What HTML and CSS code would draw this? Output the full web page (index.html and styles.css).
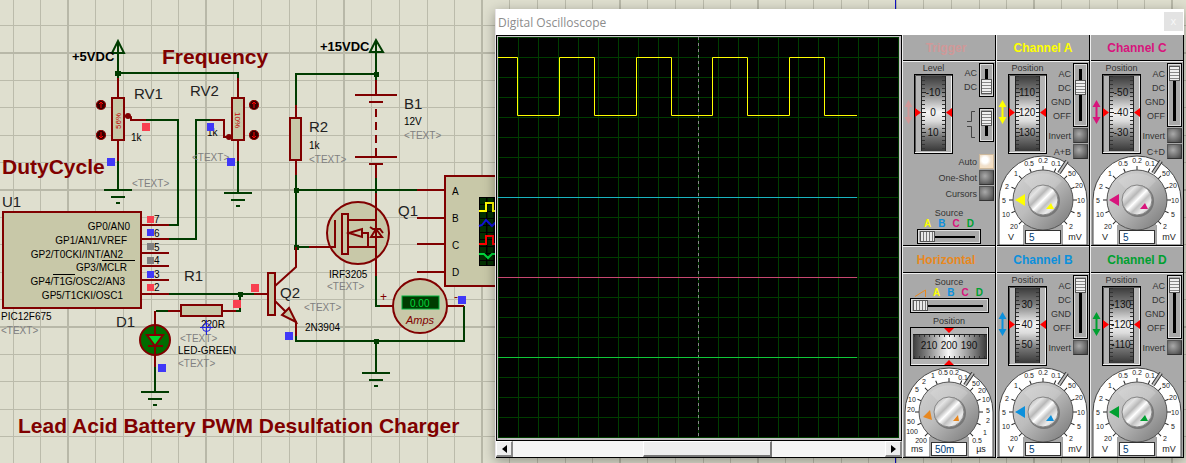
FILE: index.html
```html
<!DOCTYPE html>
<html lang="en">
<head>
<meta charset="utf-8">
<title>Lead Acid Battery PWM Desulfation Charger</title>
<link rel="stylesheet" href="styles.css">
</head>
<body>
<svg class="defs" aria-hidden="true">
  <defs>
    <linearGradient id="drumV" x1="0" y1="0" x2="0" y2="1">
      <stop offset="0" stop-color="#3c3c3c"/><stop offset=".2" stop-color="#787878"/><stop offset=".48" stop-color="#f4f4f4"/><stop offset=".6" stop-color="#dcdcdc"/><stop offset=".82" stop-color="#707070"/><stop offset="1" stop-color="#383838"/>
    </linearGradient>
    <linearGradient id="drumH">
      <stop offset="0" stop-color="#3c3c3c"/><stop offset=".2" stop-color="#868686"/><stop offset=".48" stop-color="#f8f8f8"/><stop offset=".8" stop-color="#868686"/><stop offset="1" stop-color="#383838"/>
    </linearGradient>
    <linearGradient id="knobOuter" x1="0" y1="0" x2="1" y2="1">
      <stop offset="0" stop-color="#d4d4d4"/><stop offset=".45" stop-color="#bcbcbc"/><stop offset="1" stop-color="#747474"/>
    </linearGradient>
    <linearGradient id="knobInner" x1="0" y1="0" x2="1" y2="1">
      <stop offset="0" stop-color="#a0a0a0"/><stop offset=".25" stop-color="#e4e4e4"/><stop offset=".38" stop-color="#b8b8b8"/><stop offset=".5" stop-color="#ffffff"/><stop offset=".62" stop-color="#c0c0c0"/><stop offset=".76" stop-color="#ececec"/><stop offset="1" stop-color="#a4a4a4"/>
    </linearGradient>
    <pattern id="drumTicksV" width="25" height="4" patternUnits="userSpaceOnUse" x="7" y="2">
      <path d="M0 0.5H4M21 0.5H25" stroke="#333"/>
    </pattern>
    <pattern id="drumTicksH" width="5" height="25" patternUnits="userSpaceOnUse" x="4" y="7">
      <path d="M0.5 0V3M0.5 22V25" stroke="#333"/>
    </pattern>
    <symbol id="drum" viewBox="0 0 39 80">
      <rect x=".5" y=".5" width="38" height="79" fill="#b4b4b4" stroke="#000"/>
      <path d="M1.5 79V1.5H38" fill="none" stroke="#555"/><path d="M37.500 2V78.500H1" fill="none" stroke="#eee"/>
      <rect x="7" y="2" width="25" height="75" fill="url(#drumV)"/>
      <rect x="7" y="2" width="25" height="75" fill="url(#drumTicksV)"/>
      <path d="M7.5 2V77M31.5 2V77" stroke="#222"/>
      <path d="M8 18.5H12M28 18.5H31M8 38.5H12M28 38.5H31M8 58.5H12M28 58.5H31" stroke="#222"/>
      <path d="M1 34V43L7 38.500ZM38 34V43L32 38.500Z" fill="#f00"/>
    </symbol>
    <symbol id="updown" viewBox="0 0 9 24">
      <path d="M4.500 0L8.500 7H5.500V17H8.500L4.500 24L.5 17H3.500V7H.5Z" fill="currentColor"/>
    </symbol>
    <symbol id="knob" viewBox="0 0 90 90">
      <path d="M1 90V45A44 44 0 0 1 89 45V90H64V70H26V90Z" fill="#fff" stroke="#444"/>
      <path d="M26 68H64V90H26Z" fill="#a9a9a9"/>
      <g stroke="#222">
        <path id="t" d="M11 45H16"/>
        <use href="#t" transform="rotate(-22 45 45)"/><use href="#t" transform="rotate(-45 45 45)"/>
        <use href="#t" transform="rotate(22 45 45)"/><use href="#t" transform="rotate(45 45 45)"/>
        <use href="#t" transform="rotate(67 45 45)"/><use href="#t" transform="rotate(90 45 45)"/>
        <use href="#t" transform="rotate(112 45 45)"/><use href="#t" transform="rotate(135 45 45)"/>
        <use href="#t" transform="rotate(158 45 45)"/><use href="#t" transform="rotate(180 45 45)"/>
        <use href="#t" transform="rotate(202 45 45)"/><use href="#t" transform="rotate(225 45 45)"/>
      </g>
      <path d="M61 18L69 6" stroke="#333" stroke-width="4"/><path d="M61 18L69 6" stroke="#bbb" stroke-width="2"/>
      <circle cx="45" cy="45" r="30" fill="url(#knobOuter)" stroke="#555"/>
      <path d="M26 26A27 27 0 0 1 64 26L56 34A16 16 0 0 0 34 34Z" fill="#fff" opacity=".15"/>
      <circle cx="46" cy="46" r="16" fill="#777"/>
      <circle cx="45" cy="45" r="15" fill="url(#knobInner)" stroke="#888"/>
    </symbol>
    <symbol id="voltKnob" viewBox="0 0 90 90">
      <use href="#knob" width="90" height="90"/>
      <path d="M17 45L27 39V51ZM48 54L53 48L56 54Z" fill="currentColor"/>
      <g class="dial-num">
        <text x="31" y="11">0.5</text><text x="45" y="8">0.2</text><text x="58" y="11">0.1</text>
        <text x="18" y="21">1</text><text x="9" y="34">2</text><text x="6" y="48">5</text><text x="8" y="62">10</text><text x="16" y="74">20</text>
        <text x="74" y="21">50</text><text x="81" y="33">20</text><text x="83" y="48">10</text><text x="81" y="62">5</text><text x="73" y="74">2</text>
      </g>
      <g class="dial-unit"><text x="13" y="85">V</text><text x="77" y="85">mV</text></g>
    </symbol>
    <pattern id="sheet" width="138" height="137" patternUnits="userSpaceOnUse" x="67" y="52">
      <rect width="138" height="137" fill="#dfdfcf"/>
      <path d="M28.500 0V137M56.500 0V137M84.500 0V137M111.500 0V137M0 28.500H138M0 55.500H138M0 83.500H138M0 110.500H138" stroke="#bbbbab"/>
      <path d="M1 0V137M0 1H138" stroke="#b8b8a8" stroke-width="2"/>
    </pattern>
    <pattern id="graticule" width="20" height="20" patternUnits="userSpaceOnUse">
      <path d="M.5 0V20M0 .5H20" stroke="#003c00"/>
    </pattern>
    <g id="rbtn"><circle r="5" fill="#300"/><circle r="4.500" fill="none" stroke="#c00000" stroke-dasharray="2 1"/><path d="M0 3V-3M-2 -1L0 -3L2 -1" fill="none" stroke="#f00"/></g>
    <path id="gnd" d="M-14 0H14M-7 7H7M-2 13H2"/>
  </defs>
</svg>

<main class="desktop">
<svg class="schematic" width="1186" height="463" role="img" aria-label="Charger schematic">
  <rect width="1186" height="463" fill="url(#sheet)"/>
  <path d="M895.500 0V463" stroke="#1010c8"/>

  <g class="part">
    <rect x="3" y="212" width="138" height="96"/>
    <rect x="112" y="98" width="12" height="42"/>
    <rect x="232" y="98" width="12" height="42"/>
    <rect x="181" y="305" width="41" height="11"/>
    <rect x="290" y="118" width="11" height="42"/>
    <rect x="268" y="273" width="7" height="42"/>
    <rect x="445" y="176" width="60" height="110"/>
    <circle cx="358" cy="233" r="31"/>
    <circle cx="420" cy="306" r="27"/>
  </g>

  <g class="wire">
    <path d="M118 41V78M118 73H238V78M118 161V190M238 161V193M112 53H124L118 41Z"/>
    <path d="M146 120H178V225H169M210 120H196V239H169"/>
    <path d="M169 294H254M240 294V311H236M168 311H156M155 367V392"/>
    <path d="M370 52H383L376 40ZM376 40V80M376 74H296V105M296 175V247H309M296 190H417M376 178V193M376 276V306H380"/>
    <path d="M296 336V341H464V306M376 341V373"/>
    <use href="#gnd" x="118" y="190"/><use href="#gnd" x="238" y="193"/><use href="#gnd" x="155" y="392"/><use href="#gnd" x="376" y="373"/>
  </g>
  <path class="node" d="M115 71h6v5h-6zM238 292h5v5h-5zM374 72h5v5h-5zM294 188h5v5h-5zM294 245h5v5h-5zM374 339h5v5h-5z"/>

  <g class="lead">
    <path d="M118 78V98M118 140V161M238 78V98M238 140V161M124 116L131 117V120H146M210 120H224V137H232"/>
    <path d="M142 225H169M142 239H169M142 253H169M142 266H169M142 280H169M142 294H169M254 294H268"/>
    <path d="M222 311H236M181 311H168M155 311V325M155 356V367"/>
    <path d="M296 105V118M296 160V175M376 80V95M355 95H397M369 102H383M355 157H397M369 164H383M376 164V178M417 190H445M417 218H445M417 244H445M417 272H445"/>
    <path d="M376 109V157" stroke-dasharray="8 5"/>
    <path d="M376 193V276M309 247H335V220M348 220H376M348 247H376M362 233H368V247M370 227L373 229H380L383 233M371 237H382L376 229ZM380 306H393M447 306H464"/>
    <path class="filled" d="M342 214H348V254H342ZM349 233L362 229V237Z"/>
    <path d="M275 286L296 267V247M275 301L296 322V336"/>
    <path class="filled" d="M282 315L289 308L296 322Z"/>
  </g>
  <circle cx="128" cy="116" r="3" fill="#800000"/><circle cx="229" cy="137" r="3" fill="#800000"/>

  <circle cx="155" cy="340" r="15" class="led"/>
  <path d="M155 325V356" stroke="#800000" stroke-width="2"/>
  <path d="M147 335H163L155 346Z" fill="#00d82c" stroke="#800000" stroke-width="2"/><path d="M148 346H163" stroke="#800000" stroke-width="2"/>

  <use href="#rbtn" transform="translate(101 105)"/><use href="#rbtn" transform="translate(101 135) rotate(180)"/>
  <use href="#rbtn" transform="translate(254 105)"/><use href="#rbtn" transform="translate(254 135) rotate(180)"/>

  <rect x="479" y="197" width="26" height="69" fill="#000"/>
  <g fill="none" stroke-width="2">
    <path d="M483 198V265M490.500 198V265" stroke="#003000" stroke-width="6" stroke-dasharray="6 1"/>
    <path d="M479 211H486V203H493V211H500" stroke="#ff0"/>
    <path d="M479 226L482 225L486 220L492 226L500 218" stroke="#11d"/>
    <path d="M479 244H486V236H493V244H500" stroke="#f00"/>
    <path d="M479 254H484L488 258L492 254H500" stroke="#00d83c"/>
  </g>
  <rect x="402" y="296" width="37" height="13" fill="#003c00" stroke="#00b43c"/>

  <g class="minor">
    <text x="134" y="99" class="ref">RV1</text><text x="190" y="96" class="ref">RV2</text>
    <text x="2" y="207" class="ref">U1</text><text x="184" y="281" class="ref">R1</text>
    <text x="116" y="327" class="ref">D1</text><text x="280" y="298" class="ref">Q2</text>
    <text x="309" y="132" class="ref">R2</text><text x="404" y="109" class="ref">B1</text><text x="398" y="216" class="ref">Q1</text>
    <text x="131" y="141">1k</text><text x="207" y="136">1k</text><text x="309" y="149">1k</text>
    <text x="404" y="125">12V</text><text x="201" y="328">220R</text><text x="178" y="354">LED-GREEN</text>
    <text x="305" y="331">2N3904</text><text x="329" y="278">IRF3205</text><text x="1" y="320">PIC12F675</text>
    <text x="452" y="195">A</text><text x="452" y="222">B</text><text x="452" y="249">C</text><text x="452" y="276">D</text>
    <text x="154" y="223">7</text><text x="154" y="237">6</text><text x="154" y="251">5</text><text x="154" y="264">4</text><text x="154" y="278">3</text><text x="154" y="291">2</text>
  </g>
  <g class="minor pins">
    <text x="130" y="230">GP0/AN0</text><text x="127" y="244">GP1/AN1/VREF</text><text x="123" y="258">GP2/T0CKI/INT/AN2</text>
    <text x="127" y="271">GP3/MCLR</text><text x="125" y="285">GP4/T1G/OSC2/AN3</text><text x="123" y="299">GP5/T1CKI/OSC1</text>
  </g>
  <path d="M102 260.500H135M53 274.500H75" stroke="#000"/>
  <g class="minor placeholder">
    <text x="132" y="187">&lt;TEXT&gt;</text><text x="192" y="161">&lt;TEXT&gt;</text><text x="309" y="163">&lt;TEXT&gt;</text>
    <text x="404" y="139">&lt;TEXT&gt;</text><text x="327" y="290">&lt;TEXT&gt;</text><text x="304" y="311">&lt;TEXT&gt;</text>
    <text x="180" y="342">&lt;TEXT&gt;</text><text x="178" y="367">&lt;TEXT&gt;</text><text x="1" y="334">&lt;TEXT&gt;</text>
  </g>
  <g class="pot">
    <text transform="translate(121 129) rotate(-90)">56%</text><text transform="translate(235 112) rotate(90)">10%</text>
  </g>
  <text x="72" y="61" class="rail">+5VDC</text><text x="320" y="51" class="rail">+15VDC</text>
  <text x="162" y="64" class="heading">Frequency</text><text x="2" y="174" class="heading">DutyCycle</text>
  <text x="18" y="433" class="heading">Lead Acid Battery PWM Desulfation Charger</text>
  <text x="410" y="307" class="reading">0.00</text><text x="406" y="324" class="amps">Amps</text>
  <text x="380" y="301" class="sign">+</text><text x="454" y="301" class="sign">-</text>

  <path class="hi" d="M142 123h8v8h-8zM147 216h7v7h-7zM147 284h7v7h-7zM251 284h8v8h-8zM233 300h8v8h-8z"/>
  <path class="lo" d="M107 158h8v8h-8zM207 123h7v8h-7zM227 158h8v8h-8zM147 229h7v7h-7zM147 271h7v7h-7zM285 332h8v8h-8zM158 364h8v8h-8zM458 296h8v8h-8z"/>
  <path class="float" d="M147 243h7v7h-7zM147 257h7v7h-7z"/>
  <g stroke="#2222e0" fill="none"><path d="M206.500 320V335M200 327.500H213"/><circle cx="206.500" cy="327.500" r="4"/></g>
</svg>

<section class="window" aria-label="Digital Oscilloscope">
  <header class="titlebar"><h1>Digital Oscilloscope</h1><button class="close" aria-label="Close">x</button></header>
  <div class="scope">
    <div class="viewer">
      <div class="screen">
        <svg viewBox="0 0 401 401" preserveAspectRatio="none" role="img" aria-label="Waveforms">
          <rect width="401" height="401" fill="#000"/><rect width="401" height="401" fill="url(#graticule)"/>
          <path d="M200.500 0V401" stroke="#888" stroke-dasharray="3 3"/>
          <g fill="none">
            <path d="M0 20.500H19.500V78.500H61.500V20.500H96.500V78.500H138.500V20.500H173.500V78.500H214.500V20.500H249.500V78.500H291.500V20.500H326.500V78.500H359" stroke="#ff0"/>
            <path d="M0 160.500H359" stroke="#19b4c0"/><path d="M0 240.500H359" stroke="#c84870"/><path d="M0 320.500H359" stroke="#10c838"/>
          </g>
        </svg>
      </div>
      <div class="scrollbar">
        <button aria-label="Scroll left"><svg width="5" height="8"><path d="M5 0V8L0 4Z"/></svg></button>
        <div class="track"><div class="thumb"></div></div>
        <button aria-label="Scroll right"><svg width="5" height="8"><path d="M0 0V8L5 4Z"/></svg></button>
      </div>
    </div>

    <div class="panels">
      <section class="panel trigger">
        <h2>Trigger</h2>
        <div class="body">
          <div class="upper">
            <svg class="arrow" width="9" height="24"><use href="#updown"/></svg>
            <div class="position"><span>Level</span>
              <svg class="wheel" width="39" height="80"><use href="#drum"/><text x="19" y="22">-10</text><text x="19" y="42">0</text><text x="19" y="62">10</text></svg></div>
            <div class="controls">
              <div class="row"><label for="tc" class="options"><span>AC</span><span>DC</span></label><input id="tc" class="switch" type="range" min="0" max="1" value="1"></div>
              <div class="row edge"><label for="te" class="options" aria-label="Edge"><svg width="8" height="28"><path d="M0 10.500H4.500V.5H8M0 15.500H4.500V26.500H8" fill="none" stroke="#444"/></svg></label><input id="te" class="switch" type="range" min="0" max="1" value="0"></div>
              <label class="row">Auto<input type="checkbox" class="push" checked></label>
              <label class="row">One-Shot<input type="checkbox" class="push"></label>
              <label class="row">Cursors<input type="checkbox" class="push"></label>
            </div>
          </div>
          <div class="source"><label for="ts">Source</label>
            <div class="letters"><b class="a">A</b><b class="b">B</b><b class="c">C</b><b class="d">D</b></div>
            <input id="ts" class="slide" type="range" min="0" max="3" value="0"></div>
        </div>
      </section>

      <section class="panel channel a">
        <h2>Channel A</h2>
        <div class="body">
          <div class="upper">
            <svg class="arrow" width="9" height="24"><use href="#updown"/></svg>
            <div class="position"><span>Position</span>
              <svg class="wheel" width="39" height="80"><use href="#drum"/><text x="19" y="22">110</text><text x="19" y="42">120</text><text x="19" y="62">130</text></svg></div>
            <div class="controls">
              <div class="row"><label for="ca" class="options"><span>AC</span><span>DC</span><span>GND</span><span>OFF</span></label><input id="ca" class="switch" type="range" min="0" max="3" value="1"></div>
              <label class="row">Invert<input type="checkbox" class="push"></label>
              <label class="row">A+B<input type="checkbox" class="push"></label>
            </div>
          </div>
          <div class="dial"><svg width="90" height="90"><use href="#voltKnob"/></svg><input type="text" value="5" aria-label="Channel A scale"></div>
        </div>
      </section>

      <section class="panel channel c">
        <h2>Channel C</h2>
        <div class="body">
          <div class="upper">
            <svg class="arrow" width="9" height="24"><use href="#updown"/></svg>
            <div class="position"><span>Position</span>
              <svg class="wheel" width="39" height="80"><use href="#drum"/><text x="19" y="22">-50</text><text x="19" y="42">-40</text><text x="19" y="62">-30</text></svg></div>
            <div class="controls">
              <div class="row"><label for="cc" class="options"><span>AC</span><span>DC</span><span>GND</span><span>OFF</span></label><input id="cc" class="switch" type="range" min="0" max="3" value="0"></div>
              <label class="row">Invert<input type="checkbox" class="push"></label>
              <label class="row">C+D<input type="checkbox" class="push"></label>
            </div>
          </div>
          <div class="dial"><svg width="90" height="90"><use href="#voltKnob"/></svg><input type="text" value="5" aria-label="Channel C scale"></div>
        </div>
      </section>

      <section class="panel horizontal">
        <h2>Horizontal</h2>
        <div class="body">
          <div class="timing">
            <div class="source"><label for="hs">Source</label>
              <div class="letters"><svg width="11" height="8"><path d="M0 7.500L10.500 1V8" fill="none" stroke="currentColor"/></svg><b class="a">A</b><b class="b">B</b><b class="c">C</b><b class="d">D</b></div>
              <input id="hs" class="slide wide" type="range" min="0" max="4" value="0"></div>
            <span class="caption">Position</span>
            <svg class="wheel" width="79" height="39">
              <rect x=".5" y=".5" width="78" height="38" fill="#b4b4b4" stroke="#000"/><path d="M77.500 1V37.500H1" fill="none" stroke="#eee"/>
              <rect x="3" y="7" width="74" height="25" fill="url(#drumH)"/><rect x="3" y="7" width="74" height="25" fill="url(#drumTicksH)"/>
              <path d="M3 7.500H77M3 31.500H77" stroke="#222"/><path d="M34 1H44L39 6ZM34 38H44L39 33Z" fill="#f00"/>
              <text x="19" y="22">210</text><text x="39" y="22">200</text><text x="59" y="22">190</text>
            </svg>
          </div>
          <div class="dial"><svg width="90" height="90"><use href="#knob"/>
            <path d="M19 50L26 43L28 53ZM49 54L54 48L55 54Z" fill="currentColor"/>
            <g class="dial-num">
              <text x="17" y="76">200</text><text x="8" y="67">100</text><text x="7" y="57">50</text><text x="7" y="45">20</text><text x="8" y="35">10</text><text x="13" y="25">5</text><text x="20" y="17">2</text><text x="29" y="11">1</text><text x="39" y="8">0.5</text><text x="50" y="8">0.2</text><text x="59" y="13">0.1</text>
              <text x="72" y="19">50</text><text x="78" y="26">20</text><text x="82" y="35">10</text><text x="84" y="46">5</text><text x="84" y="56">2</text><text x="81" y="68">1</text><text x="73" y="76">0.5</text>
            </g>
            <g class="dial-unit"><text x="13" y="85">ms</text><text x="77" y="85">µs</text></g></svg><input type="text" value="50m" aria-label="Time base"></div>
        </div>
      </section>

      <section class="panel channel b">
        <h2>Channel B</h2>
        <div class="body">
          <div class="upper">
            <svg class="arrow" width="9" height="24"><use href="#updown"/></svg>
            <div class="position"><span>Position</span>
              <svg class="wheel" width="39" height="80"><use href="#drum"/><text x="19" y="22">30</text><text x="19" y="42">40</text><text x="19" y="62">50</text></svg></div>
            <div class="controls">
              <div class="row"><label for="cb" class="options"><span>AC</span><span>DC</span><span>GND</span><span>OFF</span></label><input id="cb" class="switch" type="range" min="0" max="3" value="0"></div>
              <label class="row">Invert<input type="checkbox" class="push"></label>
            </div>
          </div>
          <div class="dial"><svg width="90" height="90"><use href="#voltKnob"/></svg><input type="text" value="5" aria-label="Channel B scale"></div>
        </div>
      </section>

      <section class="panel channel d">
        <h2>Channel D</h2>
        <div class="body">
          <div class="upper">
            <svg class="arrow" width="9" height="24"><use href="#updown"/></svg>
            <div class="position"><span>Position</span>
              <svg class="wheel" width="39" height="80"><use href="#drum"/><text x="19" y="22">-130</text><text x="19" y="42">-120</text><text x="19" y="62">-110</text></svg></div>
            <div class="controls">
              <div class="row"><label for="cd" class="options"><span>AC</span><span>DC</span><span>GND</span><span>OFF</span></label><input id="cd" class="switch" type="range" min="0" max="3" value="0"></div>
              <label class="row">Invert<input type="checkbox" class="push"></label>
            </div>
          </div>
          <div class="dial"><svg width="90" height="90"><use href="#voltKnob"/></svg><input type="text" value="5" aria-label="Channel D scale"></div>
        </div>
      </section>
    </div>
  </div>
</section>
</main>
</body>
</html>
```
FILE: styles.css
```css
* { box-sizing: border-box; }
body { margin: 0; background: #dfdfcf; font-family: "Liberation Sans", Arial, sans-serif; }
svg { display: block; }
.defs { position: absolute; width: 0; height: 0; }
.desktop { position: relative; min-height: 100vh; overflow: hidden; }

/* schematic */
.part * { fill: #c8c8a8; stroke: #800000; stroke-width: 2; }
.wire { fill: none; stroke: #003c00; stroke-width: 2; }
.node { fill: #003c00; }
.lead { fill: none; stroke: #800000; stroke-width: 2; }
.filled { fill: #c8c8a8; }
.led { fill: #006c00; stroke: #800000; stroke-width: 2; }
.minor { font-size: 10px; fill: #000; }
.ref { font-size: 15px; fill: #222; }
.pins { text-anchor: end; }
.placeholder { fill: #808080; }
.pot { font-size: 8px; fill: #c00000; }
.rail { font-size: 13px; font-weight: bold; }
.heading { font-size: 21px; font-weight: bold; fill: #800000; }
.reading { font-size: 10px; fill: #00d83c; }
.amps { font-size: 11px; font-style: italic; fill: #800000; }
.sign { font-size: 12px; fill: #800000; }
.hi { fill: #f84050; }
.lo { fill: #4038f8; }
.float { fill: #808080; }

/* oscilloscope window */
.window { position: absolute; left: 495px; right: 2px; top: 9px; background: #e8e4e8; padding-left: 1px; box-shadow: 0 3px 12px rgba(0, 0, 0, .35); }
.titlebar { display: flex; align-items: center; justify-content: space-between; height: 26px; padding: 0 1px 0 2px; background: #fff; }
.titlebar h1 { margin: 0; font: 12px "Open Sans", sans-serif; color: #8c8c8c; }
.close { width: 19px; height: 19px; margin-bottom: 2px; padding: 0; border: 0; background: #e3e3e3; color: #f8f8f8; font: 11px/16px "Open Sans", sans-serif; }
.scope { display: flex; }
.viewer { flex: 1; display: flex; flex-direction: column; min-width: 0; }
.screen { border: 1px solid #000; padding: 1px 2px 2px 1px; background: #c4c0c4; }
.screen svg { width: 100%; height: 401px; }
.scrollbar { display: flex; flex: 1; height: 17px; border-bottom: 1px solid #000; background: #f4f4f4; }
.scrollbar button { display: grid; place-items: center; width: 17px; padding: 0; border: 1px solid; border-width: 1px 2px 2px 1px; border-color: #fff #888 #888 #fff; background: #eee; }
.track { flex: 1; display: flex; padding-left: 130px; }
.thumb { width: 129px; border: 1px solid; border-width: 1px 2px 2px 1px; border-color: #fff #777 #777 #fff; background: #eee; }

/* instrument panels */
.panels { display: grid; grid-template-columns: repeat(3, 94px); }
.panel { display: flex; flex-direction: column; border-left: 1px solid #eee; border-right: 1px solid #000; background: #a9a9a9; color: #333; font-size: 9px; line-height: 12px; }
.panel h2 { margin: 0; height: 26px; border-bottom: 1px solid #000; font-size: 12px; line-height: 26px; text-align: center; color: var(--tone); }
.horizontal h2, .b h2, .d h2 { height: 27px; border-top: 1px solid #eee; }
.horizontal h2, .trigger h2 { padding-right: 6px; }
.panel.a { --tone: #ffff00; }
.panel.b { --tone: #0c90dc; }
.panel.c { --tone: #d8147c; }
.panel.d { --tone: #00a030; }
.trigger { --tone: #d09898; }
.horizontal { --tone: #e88820; }
.body { display: grid; grid-template: 93px 90px / minmax(0, 1fr); border-top: 1px solid #eee; border-bottom: 1px solid #000; }
.upper { display: flex; height: 93px; }
.arrow { flex: none; margin: 38px 1px 0; color: var(--tone); }
.position { flex: none; display: flex; flex-direction: column; align-items: center; width: 39px; white-space: nowrap; }
.wheel { flex: none; }
.wheel text { font-size: 10px; text-anchor: middle; fill: #111; }
.controls { flex: 1; min-width: 0; display: flex; flex-direction: column; gap: 1px; padding: 1px 1px 0 0; z-index: 1; }
.row { display: flex; justify-content: flex-end; align-items: center; gap: 2px; white-space: nowrap; }
.options { display: flex; flex-direction: column; align-items: flex-end; line-height: 14px; }
.edge { margin: 10px 0 11px; }
.edge .options { padding-right: 2px; }
.switch, .slide, .push { appearance: none; margin: 0; flex: none; border: 1px solid #000; outline: 1px solid #ddd; outline-offset: -2px; }
.switch { writing-mode: vertical-lr; width: 15px; height: 64px; padding: 2px; background: linear-gradient(#000, #000) center / 3px 52px no-repeat #a9a9a9; }
.trigger .switch { height: 34px; background-size: 3px 22px; }
.switch::-webkit-slider-thumb { appearance: none; width: 11px; height: 15px; border: 1px solid #555; background: repeating-linear-gradient(#f0f0f0 0 2px, #888 2px 3px); }
.push { width: 15px; height: 15px; outline: 0; border-color: #555 #333 #333 #555; background: radial-gradient(circle at 5px 5px, #aaa, #444 11px); }
.push:checked { border-color: #ccb89c; background: radial-gradient(circle at 5px 5px, #fff 3px, #f0e0cc 6px, #f8dcb8); }
.source { display: flex; flex-direction: column; align-items: center; align-self: end; padding-bottom: 1px; }
.letters { display: flex; gap: 7px; font-size: 10px; line-height: 10px; align-items: center; }
.letters .a { color: #ff0; }
.letters .b { color: #0c90dc; }
.letters .c { color: #d8147c; }
.letters .d { color: #00a030; }
.letters svg { color: var(--tone); }
.slide { width: 64px; height: 15px; padding: 1px 2px; background: linear-gradient(#000, #000) center / 52px 2px no-repeat #a9a9a9; }
.trigger .slide { align-self: flex-start; margin-left: 14px; }
.slide.wide { width: 79px; background-size: 67px 2px; }
.slide::-webkit-slider-thumb { appearance: none; width: 15px; height: 11px; border: 1px solid #555; background: repeating-linear-gradient(90deg, #e8e8e8 0 2px, #777 2px 3px); }
.timing { display: flex; flex-direction: column; align-items: center; padding-top: 2px; }
.timing .source { align-self: center; padding-bottom: 0; }
.caption { margin: 2px 0 0; }
.dial { display: grid; justify-items: center; align-items: end; }
.dial > * { grid-area: 1 / 1; }
.dial > svg { color: var(--tone); }
.dial input { width: 36px; height: 14px; margin: 0 0 1px; padding: 0 3px; border: 1px solid #333; background: #fff; color: #003c78; font: 10px "Liberation Sans", Arial, sans-serif; }
.dial-num { font-size: 7px; text-anchor: middle; fill: #222; }
.dial-unit { font-size: 9px; text-anchor: middle; fill: #222; }
```
